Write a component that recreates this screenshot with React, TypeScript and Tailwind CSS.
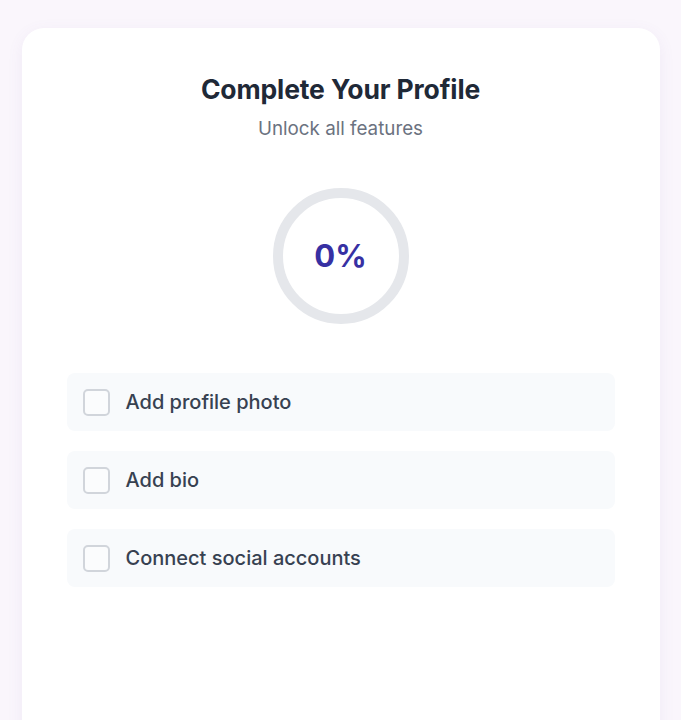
import React from "react";

const items = ["Add profile photo", "Add bio", "Connect social accounts"];

export default function App() {
  return (
    <div className="min-h-screen bg-[#faf6fc] pt-[28px] overflow-hidden" style={{ fontFamily: "Inter, 'Noto Sans', sans-serif" }}>
      <div className="mx-auto w-[638px] min-h-[720px] bg-white rounded-[22px] shadow-[0_4px_16px_rgba(120,90,160,0.08)] px-[45px] pt-[45px]">
        <h1 className="text-center text-[26.5px] leading-8 font-bold text-[#1f2937] tracking-[-0.005em]">Complete Your Profile</h1>
        <p className="mt-[10px] text-center text-[18.8px] leading-7 text-[#6b7280]">Unlock all features</p>
        <div className="mt-[43px] flex justify-center">
          <div className="relative w-[140px] h-[140px]">
            <svg width="140" height="140" viewBox="0 0 140 140" className="absolute inset-0">
              <circle cx="70" cy="70" r="63" fill="none" stroke="#e5e7eb" strokeWidth="10" />
            </svg>
            <div className="absolute inset-0 flex items-center justify-center text-[31px] font-bold text-[#3730a3]">0%</div>
          </div>
        </div>
        <div className="mt-[47px] flex flex-col gap-5">
          {items.map((t) => (
            <div key={t} className="flex items-center gap-4 bg-[#f8fafc] rounded-lg px-4 h-[58px]">
              <div className="w-[27px] h-[27px] rounded-[5px] border-2 border-[#d1d5db] bg-white/40" />
              <span className="text-[20px] font-medium text-[#374151]">{t}</span>
            </div>
          ))}
        </div>
      </div>
    </div>
  );
}
